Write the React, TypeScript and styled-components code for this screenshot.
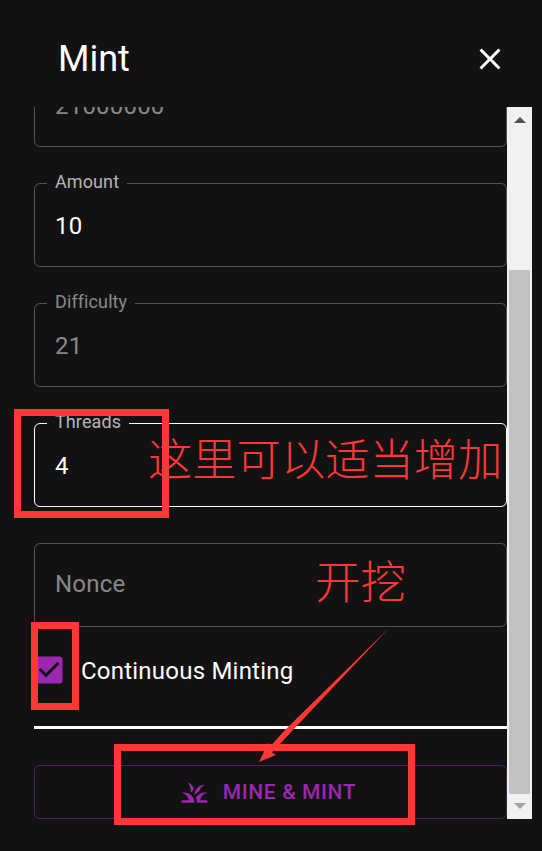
import { createGlobalStyle } from "styled-components";
import styled from "styled-components";
import { MdCheckBox, MdClose, MdGrass } from "react-icons/md";

const GlobalStyle = createGlobalStyle`
  html, body {
    margin: 0;
    padding: 0;
    background: #121212;
  }
  * {
    box-sizing: border-box;
  }
`;

const Page = styled.div`
  position: relative;
  width: 542px;
  height: 851px;
  overflow: hidden;
  background: #121212;
  color: #fff;
  font-family: Roboto, "Liberation Sans", sans-serif;
`;

const Header = styled.header`
  display: flex;
  align-items: center;
  justify-content: space-between;
  height: 107px;
  padding: 10px 34px 0 58px;
`;

const Title = styled.h2`
  margin: 0;
  font-size: 36px;
  font-weight: 400;
  line-height: 1;
`;

const CloseButton = styled.button`
  display: flex;
  padding: 0;
  border: 0;
  background: none;
  color: #fff;
`;

const Body = styled.div`
  display: flex;
  height: 712px;
  padding-left: 34px;
`;

const FormClip = styled.div`
  width: 473px;
  height: 100%;
  overflow: hidden;
`;

const Form = styled.form`
  display: flex;
  flex-direction: column;
  gap: 36px;
  margin-top: -44px;
`;

const Field = styled.div<{ $active?: boolean }>`
  position: relative;
  display: flex;
  align-items: center;
  height: 84px;
  padding: 1px 20px 0;
  border: 1px solid ${(p) => (p.$active ? "#fff" : "rgba(255, 255, 255, 0.27)")};
  border-radius: 6px;
`;

const FieldLabel = styled.label<{ $dim?: boolean }>`
  position: absolute;
  top: -13px;
  left: 12px;
  padding: 0 8px;
  background: #121212;
  color: rgba(255, 255, 255, ${(p) => (p.$dim ? 0.5 : 0.7)});
  font-size: 18px;
  line-height: 21px;
  letter-spacing: 0.1px;
`;

const FieldValue = styled.span<{ $dim?: boolean }>`
  color: ${(p) => (p.$dim ? "rgba(255, 255, 255, 0.5)" : "#fff")};
  font-size: 24px;
  line-height: 28px;
  letter-spacing: 0.2px;
`;

const Placeholder = styled(FieldValue)`
  margin-bottom: 3px;
`;

const Bottom = styled.div`
  margin-top: -36px;
`;

const CheckRow = styled.div`
  display: flex;
  align-items: center;
  height: 86px;
  color: #9c27b0;
  svg {
    margin-left: -3px;
  }
`;

const CheckLabel = styled.span`
  margin: 2px 0 0 14px;
  color: #fff;
  font-size: 24px;
  letter-spacing: 0.22px;
`;

const Divider = styled.hr`
  height: 3px;
  margin: 13px 0 36px;
  border: 0;
  background: #fff;
`;

const MintButton = styled.button`
  display: flex;
  align-items: center;
  justify-content: center;
  gap: 13px;
  width: 100%;
  height: 54px;
  padding: 0 6px 0 0;
  border: 1px solid rgba(156, 39, 176, 0.5);
  border-radius: 6px;
  background: none;
  color: #9c27b0;
  font-family: inherit;
  font-size: 21px;
  font-weight: 500;
  letter-spacing: 0.6px;
`;

const ScrollTrack = styled.div`
  display: flex;
  flex-direction: column;
  align-items: center;
  width: 25px;
  height: 100%;
  background: #f1f1f1;
`;

const ScrollArrow = styled.div<{ $down?: boolean }>`
  flex: none;
  width: 0;
  height: 0;
  margin: ${(p) => (p.$down ? "9px 0 0" : "10px 0 0")};
  border-left: 6px solid transparent;
  border-right: 6px solid transparent;
  ${(p) =>
    p.$down
      ? "border-top: 6px solid #a3a3a3;"
      : "border-bottom: 6px solid #505050;"}
`;

const ScrollThumb = styled.div`
  width: 21px;
  height: 524px;
  margin-top: 147px;
  background: #c1c1c1;
`;

const RedBox = styled.div<{ $x: number; $y: number; $w: number; $h: number }>`
  position: absolute;
  left: ${(p) => p.$x}px;
  top: ${(p) => p.$y}px;
  width: ${(p) => p.$w}px;
  height: ${(p) => p.$h}px;
  border: 7px solid #ff3737;
`;

const RedNote = styled.div<{ $x: number; $y: number; $size: number }>`
  position: absolute;
  left: ${(p) => p.$x}px;
  top: ${(p) => p.$y}px;
  color: #ff3737;
  font-family: "Noto Sans CJK SC", sans-serif;
  font-size: ${(p) => p.$size}px;
  font-weight: 300;
  line-height: 56px;
  white-space: nowrap;
`;

const ArrowMark = styled.svg`
  position: absolute;
  left: 0;
  top: 0;
`;

const fields = [
  { label: "Total", value: "21000000", dim: true },
  { label: "Amount", value: "10" },
  { label: "Difficulty", value: "21", dim: true },
  { label: "Threads", value: "4", active: true },
];

export default function App() {
  return (
    <Page>
      <GlobalStyle />
      <Header>
        <Title>Mint</Title>
        <CloseButton type="button" aria-label="Close">
          <MdClose size={36} />
        </CloseButton>
      </Header>
      <Body>
        <FormClip>
          <Form>
            {fields.map((f) => (
              <Field key={f.label} $active={f.active}>
                <FieldLabel $dim={f.dim}>{f.label}</FieldLabel>
                <FieldValue $dim={f.dim}>{f.value}</FieldValue>
              </Field>
            ))}
            <Field>
              <Placeholder $dim>Nonce</Placeholder>
            </Field>
            <Bottom>
              <CheckRow>
                <MdCheckBox size={36} />
                <CheckLabel>Continuous Minting</CheckLabel>
              </CheckRow>
              <Divider />
              <MintButton type="button">
                <MdGrass size={31} />
                MINE &amp; MINT
              </MintButton>
            </Bottom>
          </Form>
        </FormClip>
        <ScrollTrack>
          <ScrollArrow />
          <ScrollThumb />
          <ScrollArrow $down />
        </ScrollTrack>
      </Body>

      <RedBox $x={14} $y={409} $w={155} $h={109} />
      <RedBox $x={31} $y={622} $w={48} $h={88} />
      <RedBox $x={114} $y={744} $w={301} $h={81} />
      <RedNote $x={148} $y={429} $size={44.3}>这里可以适当增加</RedNote>
      <RedNote $x={315} $y={551} $size={45.5}>开挖</RedNote>
      <ArrowMark width="542" height="851" viewBox="0 0 542 851">
        <polygon
          fill="#ff3737"
          points="389,628 293,730 272,752.5 276,755 259,762 268,743 270.5,746 285,730"
        />
      </ArrowMark>
    </Page>
  );
}
